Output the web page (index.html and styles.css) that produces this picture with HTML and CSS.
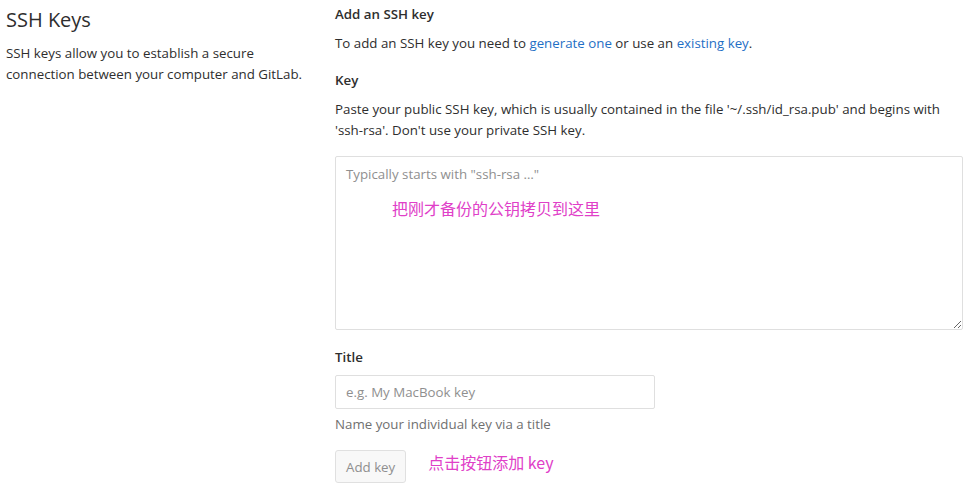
FILE: index.html
```html
<!DOCTYPE html>
<html>
<head>
<meta charset="utf-8">
<link rel="stylesheet" href="styles.css">
</head>
<body>
<div class="page">
  <aside class="side">
    <h1 class="side-title">SSH Keys</h1>
    <p class="side-text">SSH keys allow you to establish a secure connection between your computer and GitLab.</p>
  </aside>
  <main class="main">
    <h2 class="sub">Add an SSH key</h2>
    <p class="text">To add an SSH key you need to <a class="link">generate one</a> or use an <a class="link">existing key</a>.</p>
    <div class="label">Key</div>
    <p class="text para">Paste your public SSH key, which is usually contained in the file '~/.ssh/id_rsa.pub' and begins with 'ssh-rsa'. Don't use your private SSH key.</p>
    <div class="area-wrap">
      <textarea class="area" placeholder="Typically starts with &quot;ssh-rsa …&quot;"></textarea>
      <span class="note note-area">把刚才备份的公钥拷贝到这里</span>
    </div>
    <div class="label title-label">Title</div>
    <input class="input" type="text" placeholder="e.g. My MacBook key">
    <div class="help">Name your individual key via a title</div>
    <div class="actions">
      <button class="btn">Add key</button>
      <span class="note">点击按钮添加 key</span>
    </div>
  </main>
</div>
</body>
</html>
```
FILE: styles.css
```css
* { box-sizing: border-box; }
html, body { margin: 0; padding: 0; background: #fff; }
body {
  font-family: "Open Sans", "Noto Sans CJK SC", sans-serif;
  font-size: 13.3px;
  color: #2e2e2e;
}
.page {
  display: flex;
  padding: 0 5px 0 6px;
}
.side { width: 329px; flex: none; }
.side-title {
  margin: 6px 0 0;
  font-size: 20px;
  font-weight: 400;
  line-height: 28px;
  color: #2e2e2e;
}
.side-text {
  margin: 9px 0 0;
  line-height: 21px;
  width: 300px;
}
.main { flex: 1; }
.sub {
  margin: 4px 0 0;
  font-size: 13.3px;
  font-weight: 600;
  line-height: 20px;
}
.text { margin: 9px 0 0; line-height: 21px; }
.link { color: #1f6fc5; text-decoration: none; }
.label {
  margin-top: 16px;
  font-weight: 600;
  line-height: 20px;
}
.para { margin-top: 9px; }
.area-wrap { position: relative; margin-top: 15px; }
.area {
  display: block;
  width: 628px;
  height: 174px;
  border: 1px solid #dfdfdf;
  border-radius: 2px;
  padding: 7px 10px;
  font-family: inherit;
  font-size: 13.3px;
  line-height: 20px;
  color: #2e2e2e;
  resize: vertical;
}
.area::placeholder, .input::placeholder { color: #8f8f8f; }
.note {
  color: #e040c8;
  font-family: "Noto Sans CJK SC", sans-serif;
  font-size: 16px;
}
.note-area {
  position: absolute;
  left: 57px;
  top: 40px;
}
.title-label { margin-top: 17px; }
.input {
  display: block;
  margin-top: 8px;
  width: 320px;
  height: 34px;
  border: 1px solid #dfdfdf;
  border-radius: 2px;
  padding: 0 10px;
  font-family: inherit;
  font-size: 13.3px;
  color: #2e2e2e;
}
.help { margin-top: 5px; color: #707070; line-height: 20px; }
.actions {
  display: flex;
  align-items: center;
  gap: 22px;
  margin-top: 16px;
}
.btn {
  height: 33px;
  padding: 0 10px;
  border: 1px solid #e0e0e0;
  border-radius: 3px;
  background: #f8f8f8;
  color: #8f8f8f;
  font-family: inherit;
  font-size: 13.3px;
}
.actions .note { margin-top: -10px; }
```
